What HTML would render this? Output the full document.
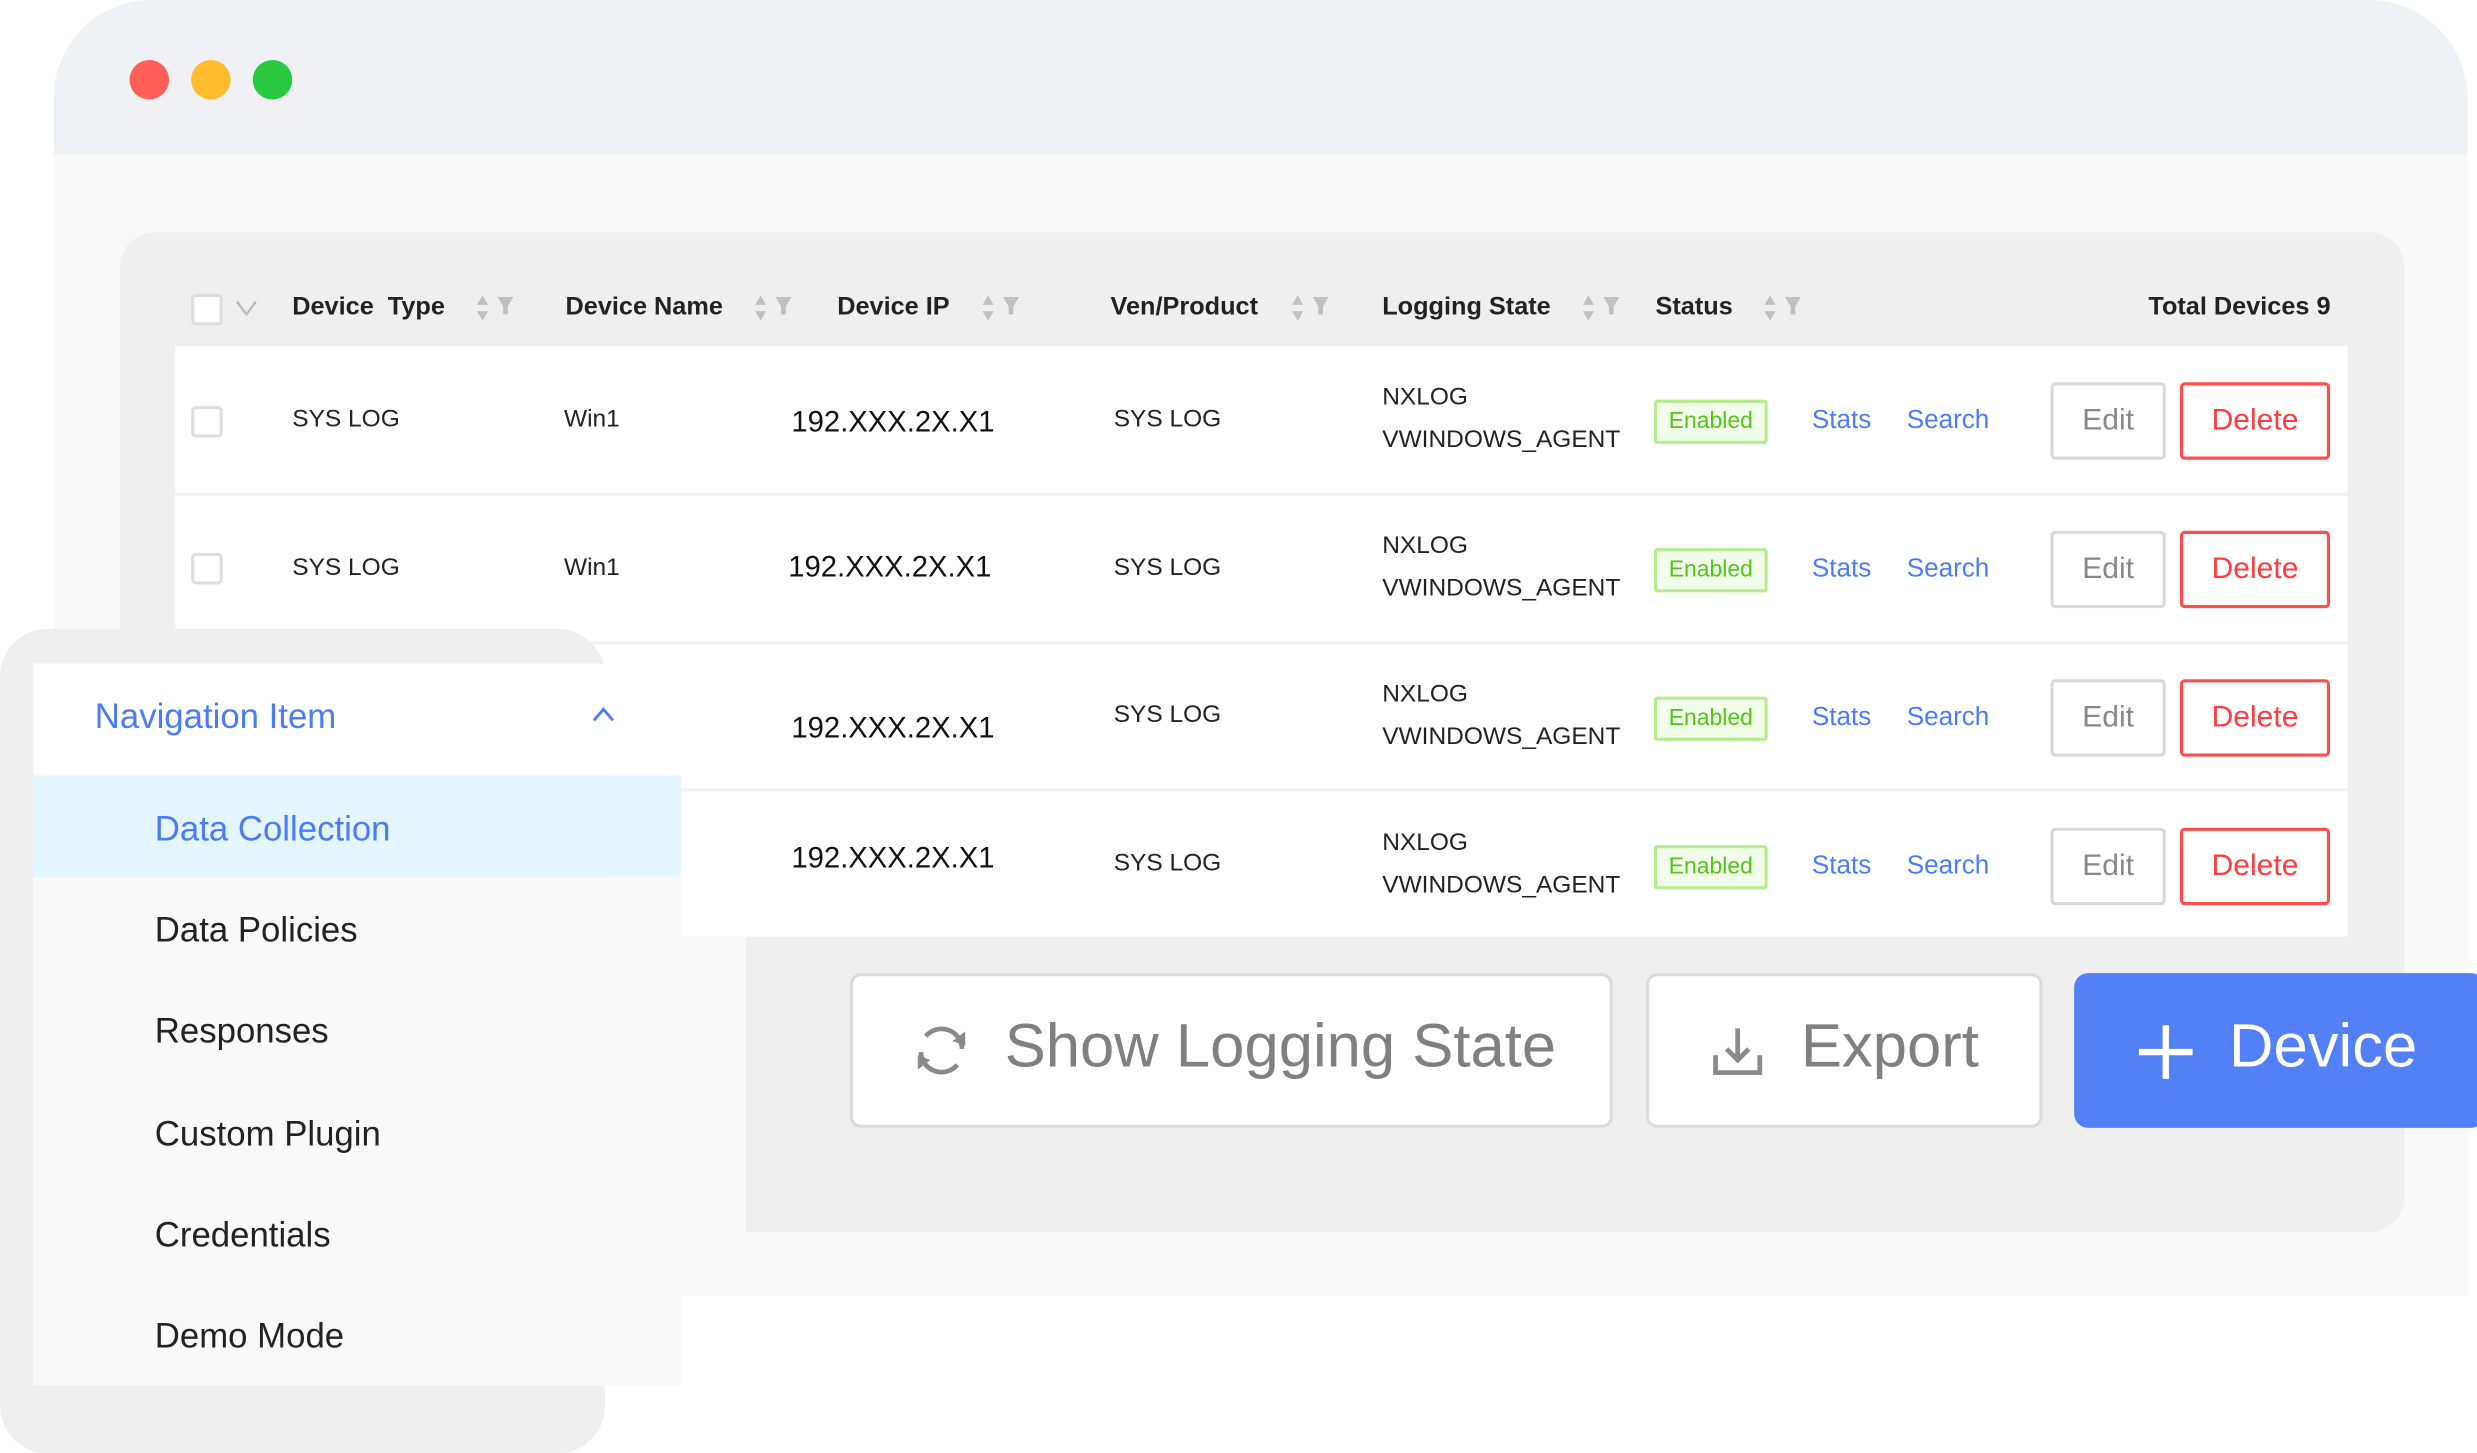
<!DOCTYPE html>
<html><head><meta charset="utf-8">
<style>
html,body{margin:0;padding:0;background:#fff;width:2477px;height:1453px;overflow:hidden}
#s{position:absolute;left:0;top:0;width:1568px;height:920px;transform:scale(1.5797);transform-origin:0 0;font-family:"Liberation Sans",sans-serif;color:#222}
.a{position:absolute}
.hd{font-weight:bold;font-size:16px;top:186px;color:#222}
.sort{position:absolute;top:187px}
.cb{position:absolute;width:16px;height:16px;border:2px solid #ddd;border-radius:3px;background:#fff}
.t{position:absolute;font-size:15.5px;color:#222}
.ip{position:absolute;font-size:18.5px;color:#111}
.en{position:absolute;left:1047px;width:68px;height:24px;border:2px solid #b7eb8f;background:#f2fde9;color:#52c41a;font-size:14.5px;text-align:center;line-height:24px;border-radius:2px}
.lk{position:absolute;color:#4b7bf5;font-size:16.5px}
.ed{position:absolute;left:1298px;width:69px;height:45px;border:2px solid #d9d9d9;border-radius:3px;background:#fff;color:#888;font-size:19px;text-align:center;line-height:45px}
.dl{position:absolute;left:1380px;width:91px;height:45px;border:2px solid #ff4d4f;border-radius:3px;background:#fff;color:#ff3b3f;font-size:19px;text-align:center;line-height:45px}
.ni{position:absolute;left:98px;font-size:22px;color:#222}
</style></head><body>
<div id="s">
<div class="a" style="left:34px;top:0;width:1528px;height:98px;background:#f0f1f4;border-radius:62px 62px 0 0"></div>
<div class="a" style="left:34px;top:98px;width:1528px;height:722px;background:#f9f9f9"></div>
<div class="a" style="left:82px;top:38px;width:25px;height:25px;border-radius:50%;background:#fe5f57"></div>
<div class="a" style="left:121px;top:38px;width:25px;height:25px;border-radius:50%;background:#febc2e"></div>
<div class="a" style="left:160px;top:38px;width:25px;height:25px;border-radius:50%;background:#28c840"></div>

<div class="a" style="left:76px;top:147px;width:1446px;height:633px;background:#efefef;border-radius:22px"></div>
<div class="a" style="left:431px;top:593px;width:41px;height:227px;background:#f9f9f9"></div>

<!-- header -->
<div class="cb" style="left:121px;top:186px"></div>
<svg class="a" style="left:149px;top:189px" width="14" height="12"><path d="M1 2 L7 10 L13 2" fill="none" stroke="#bbb" stroke-width="1.4"/></svg>
<div class="a hd" style="left:185px">Device&nbsp; Type</div>
<div class="a hd" style="left:358px">Device Name</div>
<div class="a hd" style="left:530px">Device IP</div>
<div class="a hd" style="left:703px">Ven/Product</div>
<div class="a hd" style="left:875px">Logging State</div>
<div class="a hd" style="left:1048px">Status</div>
<div class="a hd" style="left:1360px">Total Devices 9</div>
<svg width="0" height="0" style="position:absolute"><defs><g id="si"><path d="M0 6 L3.5 0 L7 6Z M0 10 L3.5 16 L7 10Z" fill="#c0c0c0"/><path d="M13 1 L23 1 L19.5 7 L19.5 12 L16.5 12 L16.5 7Z" fill="#c0c0c0"/></g></defs></svg>
<svg class="sort" style="left:302px" width="26" height="18"><use href="#si"/></svg>
<svg class="sort" style="left:478px" width="26" height="18"><use href="#si"/></svg>
<svg class="sort" style="left:622px" width="26" height="18"><use href="#si"/></svg>
<svg class="sort" style="left:818px" width="26" height="18"><use href="#si"/></svg>
<svg class="sort" style="left:1002px" width="26" height="18"><use href="#si"/></svg>
<svg class="sort" style="left:1117px" width="26" height="18"><use href="#si"/></svg>

<!-- rows -->
<div class="a" style="left:111px;top:219px;width:1375px;height:374px;background:#fff"></div>
<div class="a" style="left:111px;top:312px;width:1375px;height:2px;background:#f2f2f2"></div>
<div class="a" style="left:111px;top:406px;width:1375px;height:2px;background:#f2f2f2"></div>
<div class="a" style="left:111px;top:499px;width:1375px;height:2px;background:#f2f2f2"></div>

<div class="cb" style="left:121px;top:257px"></div>
<div class="t" style="left:185px;top:257px">SYS LOG</div>
<div class="t" style="left:357px;top:257px">Win1</div>
<div class="ip" style="left:501px;top:256px">192.XXX.2X.X1</div>
<div class="t" style="left:705px;top:257px">SYS LOG</div>
<div class="t" style="left:875px;top:243px">NXLOG</div>
<div class="t" style="left:875px;top:270px">VWINDOWS_AGENT</div>
<div class="en" style="top:253px">Enabled</div>
<div class="lk" style="left:1147px;top:257px">Stats</div>
<div class="lk" style="left:1207px;top:257px">Search</div>
<div class="ed" style="top:242px">Edit</div>
<div class="dl" style="top:242px">Delete</div>

<div class="cb" style="left:121px;top:350px"></div>
<div class="t" style="left:185px;top:351px">SYS LOG</div>
<div class="t" style="left:357px;top:351px">Win1</div>
<div class="ip" style="left:499px;top:348px">192.XXX.2X.X1</div>
<div class="t" style="left:705px;top:351px">SYS LOG</div>
<div class="t" style="left:875px;top:337px">NXLOG</div>
<div class="t" style="left:875px;top:364px">VWINDOWS_AGENT</div>
<div class="en" style="top:347px">Enabled</div>
<div class="lk" style="left:1147px;top:351px">Stats</div>
<div class="lk" style="left:1207px;top:351px">Search</div>
<div class="ed" style="top:336px">Edit</div>
<div class="dl" style="top:336px">Delete</div>

<div class="ip" style="left:501px;top:450px">192.XXX.2X.X1</div>
<div class="t" style="left:705px;top:444px">SYS LOG</div>
<div class="t" style="left:875px;top:431px">NXLOG</div>
<div class="t" style="left:875px;top:458px">VWINDOWS_AGENT</div>
<div class="en" style="top:441px">Enabled</div>
<div class="lk" style="left:1147px;top:445px">Stats</div>
<div class="lk" style="left:1207px;top:445px">Search</div>
<div class="ed" style="top:430px">Edit</div>
<div class="dl" style="top:430px">Delete</div>

<div class="ip" style="left:501px;top:532px">192.XXX.2X.X1</div>
<div class="t" style="left:705px;top:538px">SYS LOG</div>
<div class="t" style="left:875px;top:525px">NXLOG</div>
<div class="t" style="left:875px;top:552px">VWINDOWS_AGENT</div>
<div class="en" style="top:535px">Enabled</div>
<div class="lk" style="left:1147px;top:539px">Stats</div>
<div class="lk" style="left:1207px;top:539px">Search</div>
<div class="ed" style="top:524px">Edit</div>
<div class="dl" style="top:524px">Delete</div>

<!-- buttons -->
<div class="a" style="left:538px;top:616px;width:479px;height:94px;background:#fff;border:2px solid #dcdcdc;border-radius:7px"></div>
<svg class="a" style="left:578px;top:647px" width="36" height="36" viewBox="0 0 36 36"><path d="M31 17 A13 13 0 0 0 8 9" fill="none" stroke="#8a8a8a" stroke-width="3"/><path d="M5 19 A13 13 0 0 0 28 27" fill="none" stroke="#8a8a8a" stroke-width="3"/><path d="M33 6 L33 15 L25 12Z" fill="#8a8a8a"/><path d="M3 30 L3 21 L11 24Z" fill="#8a8a8a"/></svg>
<div class="a" style="left:636px;top:641px;font-size:39px;color:#808080">Show Logging State</div>
<div class="a" style="left:1042px;top:616px;width:247px;height:94px;background:#fff;border:2px solid #dcdcdc;border-radius:7px"></div>
<svg class="a" style="left:1083px;top:648px" width="34" height="34" viewBox="0 0 34 34"><path d="M17 3 L17 23 M10 16 L17 23 L24 16" fill="none" stroke="#8a8a8a" stroke-width="3"/><path d="M3 20 L3 31 L31 31 L31 20" fill="none" stroke="#8a8a8a" stroke-width="3"/></svg>
<div class="a" style="left:1140px;top:641px;font-size:39px;color:#808080">Export</div>
<div class="a" style="left:1313px;top:616px;width:260px;height:98px;background:#5280f7;border-radius:9px"></div>
<svg class="a" style="left:1352px;top:647px" width="38" height="38"><path d="M19 2 L19 36 M2 19 L36 19" stroke="#fff" stroke-width="4"/></svg>
<div class="a" style="left:1411px;top:641px;font-size:39px;color:#fff">Device</div>

<!-- nav -->
<div class="a" style="left:0;top:398px;width:383px;height:522px;background:#efefef;border-radius:30px"></div>
<div class="a" style="left:21px;top:420px;width:410px;height:71px;background:#fff"></div>
<div class="a" style="left:21px;top:491px;width:410px;height:64px;background:#e3f5fd"></div>
<div class="a" style="left:21px;top:555px;width:410px;height:322px;background:#f9f9f9"></div>
<div class="a" style="left:60px;top:441px;font-size:22px;color:#4b7bf5">Navigation Item</div>
<svg class="a" style="left:374px;top:446px" width="16" height="12"><path d="M2 10 L8 3 L14 10" fill="none" stroke="#4b7bf5" stroke-width="1.8"/></svg>
<div class="ni" style="top:512px;color:#4b7bf5">Data Collection</div>
<div class="ni" style="top:576px">Data Policies</div>
<div class="ni" style="top:640px">Responses</div>
<div class="ni" style="top:705px">Custom Plugin</div>
<div class="ni" style="top:769px">Credentials</div>
<div class="ni" style="top:833px">Demo Mode</div>
</div>
</body></html>
